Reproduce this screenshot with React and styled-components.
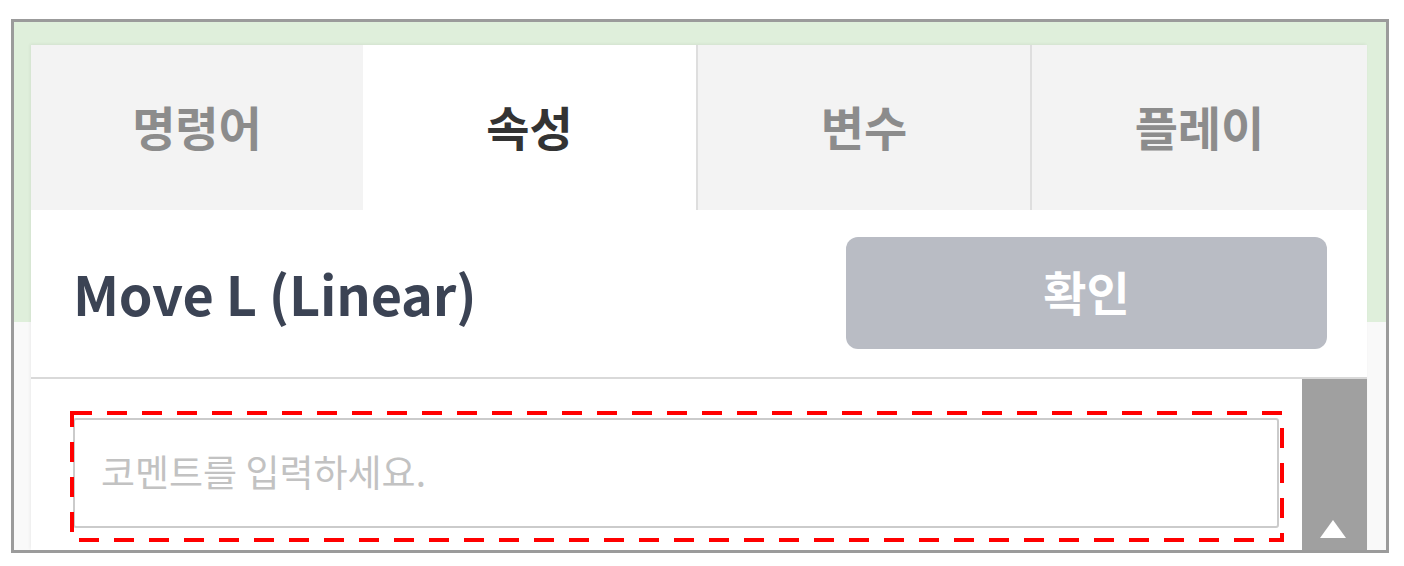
import styled, { createGlobalStyle } from "styled-components";

const GlobalStyle = createGlobalStyle`
  html, body {
    margin: 0;
    padding: 0;
    background: #fff;
  }
  body {
    font-family: "Noto Sans CJK KR", "Noto Sans", sans-serif;
  }
  * {
    box-sizing: border-box;
  }
`;

const Frame = styled.div`
  margin: 19px 0 0 11px;
  width: 1378px;
  height: 534px;
  border: 3px solid #9b9b9b;
  overflow: hidden;
  padding: 23px 19px 0 17px;
  background: linear-gradient(to bottom, #dfefdb 0, #dfefdb 300px, #f9f9f9 300px);
`;

const Panel = styled.div`
  height: 100%;
  display: flex;
  flex-direction: column;
  background: #fff;
  box-shadow: -1px -1px 3px rgba(0, 0, 0, 0.06);
`;

const TabBar = styled.div`
  display: grid;
  grid-template-columns: 332px 333px 334px 1fr;
  height: 165px;
  flex: none;
`;

const Tab = styled.div`
  display: flex;
  align-items: center;
  justify-content: center;
  font-size: 47px;
  font-weight: 700;
  color: ${(p) => (p.$active ? "#333" : "#8c8c8c")};
  background: ${(p) => (p.$active ? "#fff" : "#f3f3f3")};
  border-left: ${(p) => (p.$divider ? "2px solid #dedede" : "none")};
  padding-bottom: 4px;
`;

const Header = styled.div`
  flex: none;
  height: 169px;
  display: flex;
  align-items: center;
  justify-content: space-between;
  padding: 0 40px 2px 42px;
  border-bottom: 2px solid #d9d9d9;
`;

const Title = styled.h2`
  margin: 0;
  font-size: 54px;
  font-weight: 700;
  color: #3b4354;
  letter-spacing: -0.2px;
`;

const ConfirmBtn = styled.button`
  width: 481px;
  height: 112px;
  border: none;
  border-radius: 12px;
  background: #b9bcc4;
  color: #fff;
  font-family: inherit;
  font-size: 47px;
  font-weight: 700;
  padding: 0 0 4px;
`;

const Body = styled.div`
  flex: 1;
  display: flex;
  min-height: 0;
`;

const Content = styled.div`
  flex: 1;
  padding: 32px 18px 0 39px;
`;

const Highlight = styled.div`
  position: relative;
  padding: 7px 5px 14px 3px;
`;

const DashOutline = styled.svg`
  position: absolute;
  inset: 0;
  width: 100%;
  height: 100%;
  overflow: visible;
  pointer-events: none;
`;

const CommentInput = styled.input`
  display: block;
  width: 100%;
  height: 110px;
  border: 2px solid #cbcbcb;
  border-radius: 3px;
  padding: 0 26px 4px;
  font-family: inherit;
  font-size: 37px;
  color: #444;
  outline: none;
  &::placeholder {
    color: #c2c2c2;
  }
`;

const ScrollBar = styled.div`
  flex: none;
  width: 65px;
  background: #a0a0a0;
  display: flex;
  flex-direction: column;
  justify-content: flex-end;
  align-items: center;
  padding: 0 4px 12px 0;
`;

const tabs = [
  { label: "명령어" },
  { label: "속성", active: true },
  { label: "변수", divider: true },
  { label: "플레이", divider: true },
];

const App = () => {
  return (
    <>
      <GlobalStyle />
      <Frame>
        <Panel>
          <TabBar>
            {tabs.map((t) => (
              <Tab key={t.label} $active={t.active} $divider={t.divider}>
                {t.label}
              </Tab>
            ))}
          </TabBar>
          <Header>
            <Title>Move L (Linear)</Title>
            <ConfirmBtn>확인</ConfirmBtn>
          </Header>
          <Body>
            <Content>
              <Highlight>
                <CommentInput placeholder="코멘트를 입력하세요." />
                <DashOutline>
                  <rect
                    x="2"
                    y="2"
                    width="calc(100% - 4px)"
                    height="calc(100% - 4px)"
                    fill="none"
                    stroke="#ff0000"
                    strokeWidth="4"
                    strokeDasharray="20 15"
                  />
                </DashOutline>
              </Highlight>
            </Content>
            <ScrollBar>
              <svg width="26" height="18" viewBox="0 0 26 18">
                <polygon points="13,0 26,18 0,18" fill="#fff" />
              </svg>
            </ScrollBar>
          </Body>
        </Panel>
      </Frame>
    </>
  );
};

export default App;
